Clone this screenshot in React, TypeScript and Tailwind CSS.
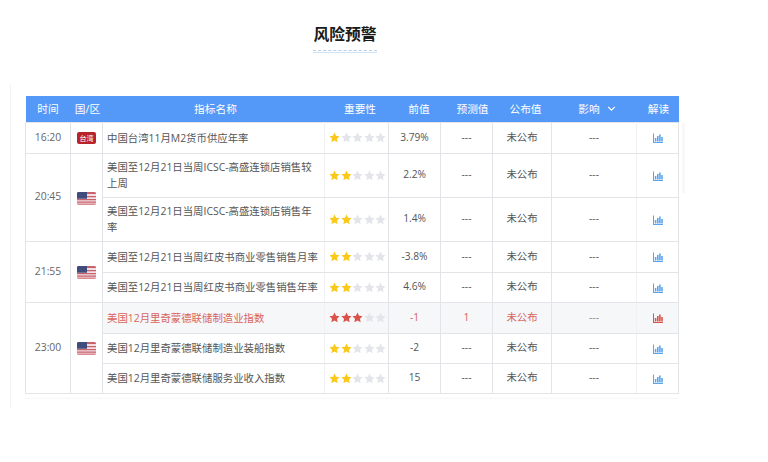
import React from "react";

type RowData = {
  name: string;
  stars: number;
  prev: string;
  forecast?: string;
  height: string;
  hot?: boolean;
};

type GroupData = {
  time: string;
  flag: "tw" | "us";
  rows: RowData[];
};

const groups: GroupData[] = [
  {
    time: "16:20",
    flag: "tw",
    rows: [{ name: "中国台湾11月M2货币供应年率", stars: 1, prev: "3.79%", height: "h-[31px]" }],
  },
  {
    time: "20:45",
    flag: "us",
    rows: [
      { name: "美国至12月21日当周ICSC-高盛连锁店销售较上周", stars: 2, prev: "2.2%", height: "h-[44px]" },
      { name: "美国至12月21日当周ICSC-高盛连锁店销售年率", stars: 2, prev: "1.4%", height: "h-[44px]" },
    ],
  },
  {
    time: "21:55",
    flag: "us",
    rows: [
      { name: "美国至12月21日当周红皮书商业零售销售月率", stars: 2, prev: "-3.8%", height: "h-[31px]" },
      { name: "美国至12月21日当周红皮书商业零售销售年率", stars: 2, prev: "4.6%", height: "h-[30px]" },
    ],
  },
  {
    time: "23:00",
    flag: "us",
    rows: [
      { name: "美国12月里奇蒙德联储制造业指数", stars: 3, prev: "-1", forecast: "1", height: "h-[31px]", hot: true },
      { name: "美国12月里奇蒙德联储制造业装船指数", stars: 2, prev: "-2", height: "h-[30px]" },
      { name: "美国12月里奇蒙德联储服务业收入指数", stars: 2, prev: "15", height: "h-[30px]" },
    ],
  },
];

const Star = ({ className }: { className: string }) => (
  <svg viewBox="0 0 20 20" className={`h-[11px] w-[11px] ${className}`}>
    <path fill="currentColor" d="M10 1l2.8 5.9 6.4.8-4.7 4.4 1.2 6.4-5.7-3.1-5.7 3.1 1.2-6.4L.8 7.7l6.4-.8z" />
  </svg>
);

const Stars = ({ count, hot }: { count: number; hot?: boolean }) => (
  <div className="flex gap-[0.6px]">
    {[0, 1, 2, 3, 4].map((i) => (
      <Star
        key={i}
        className={i < count ? (hot ? "text-[#d9534a]" : "text-[#fbc91b]") : "text-[#e3e5ea]"}
      />
    ))}
  </div>
);

const ChartIcon = ({ hot }: { hot?: boolean }) => (
  <svg viewBox="0 0 10 10" className={`mx-auto mt-[1px] h-[10px] w-[10px] ${hot ? "text-[#d9534a]" : "text-[#5ba4ee]"}`}>
    <path fill="currentColor" d="M0 0.5h1V9h9v1H0zM1.8 5h1.6v3.4H1.8zM4 3h1.6v5.4H4zM6.1 1.5h1.6v6.9H6.1zM8.2 4h1.6v4.4H8.2z" />
  </svg>
);

const Flag = ({ type }: { type: "tw" | "us" }) => {
  if (type === "tw") {
    return (
      <div className="mx-auto mt-[1px] flex h-[12px] w-[19px] items-center justify-center rounded-[2px] bg-[#b8242a] text-[7px] leading-none text-white">
        台湾
      </div>
    );
  }
  return (
    <svg viewBox="0 0 19 13" className="mx-auto mt-[2px] h-[13px] w-[19px]">
      <rect width="19" height="13" rx="1.5" fill="#f1dfe2" />
      <path fill="#c9626c" d="M0 1.5a1.5 1.5 0 0 1 1.5-1.5H17.5a1.5 1.5 0 0 1 1.5 1.5V2H0zM0 4h19v1.2H0zM0 7h19v1.2H0zM0 9.6h19v1.1H0z" />
      <path fill="#d98a92" d="M0 11.6h19a1.5 1.5 0 0 1-1.5 1.4H1.5A1.5 1.5 0 0 1 0 11.6z" />
      <path fill="#3f4c7c" d="M1.5 0H10v6.8H0V1.5A1.5 1.5 0 0 1 1.5 0z" />
    </svg>
  );
};

const headers = [
  { label: "时间", cls: "" },
  { label: "国/区", cls: "pl-[2px]" },
  { label: "指标名称", cls: "pl-[4px]" },
  { label: "重要性", cls: "pl-[7px]" },
  { label: "前值", cls: "pl-[9px]" },
  { label: "预测值", cls: "pl-[12px]" },
  { label: "公布值", cls: "pl-[7px]" },
];

const cell = "border border-[#e2e4e8]";

export default function App() {
  return (
    <div className="relative h-[462px] w-[768px] overflow-hidden bg-white font-['Open_Sans','Noto_Sans_CJK_SC',sans-serif] text-[10.4px] text-[#555]">
      <div className="flex w-[690px] flex-col items-center pt-[24px]">
        <h1 className="text-[15.8px] leading-[21px] font-bold text-[#1a1a1a]">风险预警</h1>
        <div className="mt-[5px] w-[64px] border-t border-dashed border-[#b9cfe6]" />
        <div className="mt-[1px] w-[64px] border-t border-[#cfe3f7]" />
      </div>

      <div className="mt-[31px] ml-[10px] w-[672px] border-l border-[#f4f4f4] pt-[12px] pb-[9px] pl-[14px]">
        <table className="w-[653px] table-fixed border-collapse">
          <colgroup>
            <col className="w-[45px]" />
            <col className="w-[32px]" />
            <col className="w-[222px]" />
            <col className="w-[64px]" />
            <col className="w-[52px]" />
            <col className="w-[52px]" />
            <col className="w-[59px]" />
            <col className="w-[85px]" />
            <col className="w-[42px]" />
          </colgroup>
          <thead>
            <tr className="h-[26px] bg-[#5599f8] text-white">
              {headers.map((h) => (
                <th key={h.label} className={`p-0 text-center text-[10.7px] font-normal ${h.cls}`}>
                  {h.label}
                </th>
              ))}
              <th className="p-0 pl-[6px] text-center text-[10.7px] font-normal">
                <span className="inline-flex items-center gap-[7px]">
                  影响
                  <svg viewBox="0 0 10 6" className="h-[5px] w-[9px]">
                    <path d="M1 1l4 4 4-4" fill="none" stroke="#fff" strokeWidth="1.4" />
                  </svg>
                </span>
              </th>
              <th className="p-0 pl-[2px] text-center text-[10.7px] font-normal">解读</th>
            </tr>
          </thead>
          <tbody>
            {groups.map((g) =>
              g.rows.map((r, i) => (
                <tr
                  key={r.name}
                  className={`${r.height} ${r.hot ? "bg-[#f6f7f9] text-[#d9635c]" : ""}`}
                >
                  {i === 0 && (
                    <>
                      <td rowSpan={g.rows.length} className={`${cell} bg-white p-0 text-center text-[10.4px] text-[#666]`}>
                        {g.time}
                      </td>
                      <td rowSpan={g.rows.length} className={`${cell} bg-white p-0`}>
                        <Flag type={g.flag} />
                      </td>
                    </>
                  )}
                  <td className={`${cell} border-r-[#f0f1f3] py-0 pr-[2px] pl-[4px] leading-[16px] ${r.hot ? "" : "text-[#555]"}`}>
                    {r.name}
                  </td>
                  <td className={`${cell} border-l-[#f0f1f3] py-0 pl-[4px]`}>
                    <Stars count={r.stars} hot={r.hot} />
                  </td>
                  <td className={`${cell} p-0 text-center text-[10.2px]`}>{r.prev}</td>
                  <td className={`${cell} p-0 text-center text-[10.2px]`}>{r.forecast ?? "---"}</td>
                  <td className={`${cell} p-0 text-center`}>未公布</td>
                  <td className={`${cell} border-r-[#f0f1f3] p-0 text-center text-[10.2px] ${r.hot ? "text-[#888]" : ""}`}>---</td>
                  <td className={`${cell} border-l-[#f0f1f3] p-0`}>
                    <ChartIcon hot={r.hot} />
                  </td>
                </tr>
              )),
            )}
          </tbody>
        </table>
        <div className="mt-[4px] w-[653px] border-t border-[#f7f7f7]" />
      </div>

      {/* faint scrollbar ghost right of the table */}
      <div className="absolute top-[123px] left-[682px] h-[70px] w-[3px] bg-[#f8f8f8]" />
    </div>
  );
}
